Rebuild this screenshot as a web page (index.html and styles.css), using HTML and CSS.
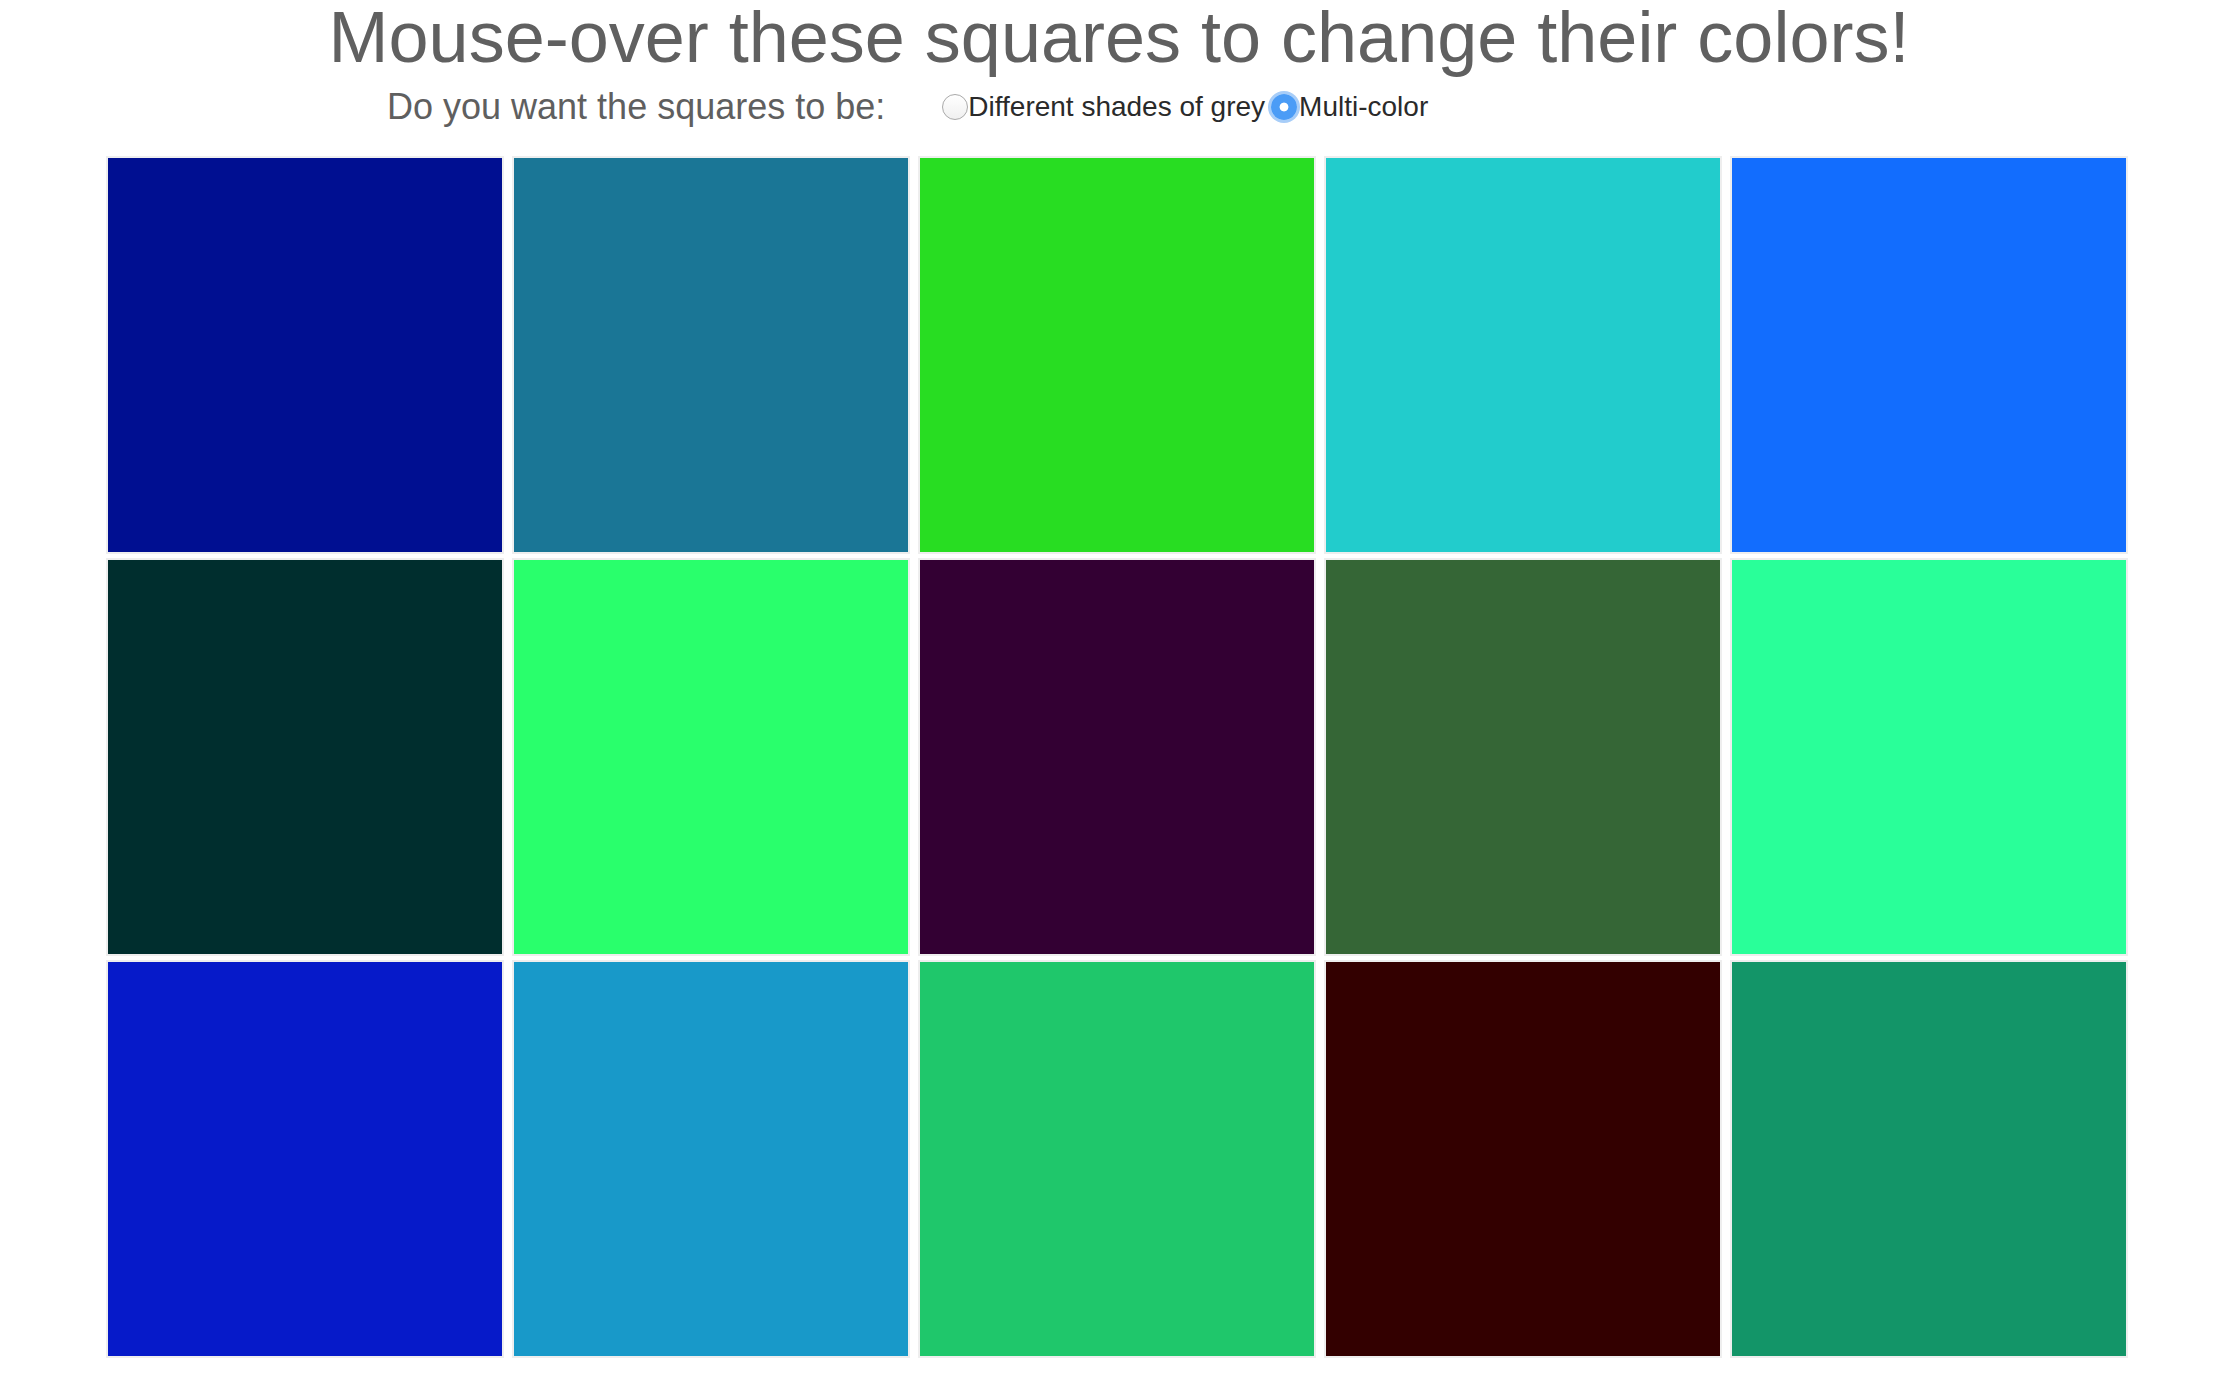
FILE: index.html
```html
<!DOCTYPE html>
<html>
<head>
<meta charset="utf-8">
<link rel="stylesheet" href="styles.css">
</head>
<body>
<h1 class="title">Mouse-over these squares to change their colors!</h1>
<form class="options">
  <span class="question">Do you want the squares to be:</span>
  <label class="choice"><input type="radio" name="mode" class="radio">Different shades of grey</label>
  <label class="choice"><input type="radio" name="mode" class="radio radio-on" checked>Multi-color</label>
</form>
<div class="board">
  <div class="square" style="background:#000f91"></div>
  <div class="square" style="background:#1a7696"></div>
  <div class="square" style="background:#28dd22"></div>
  <div class="square" style="background:#22cccc"></div>
  <div class="square" style="background:#126dfe"></div>
  <div class="square" style="background:#002e2e"></div>
  <div class="square" style="background:#29ff6c"></div>
  <div class="square" style="background:#330033"></div>
  <div class="square" style="background:#356636"></div>
  <div class="square" style="background:#29ff99"></div>
  <div class="square" style="background:#061ac9"></div>
  <div class="square" style="background:#1899c9"></div>
  <div class="square" style="background:#1fc76b"></div>
  <div class="square" style="background:#330000"></div>
  <div class="square" style="background:#139568"></div>
</div>
</body>
</html>
```

FILE: styles.css
```css
html, body {
  margin: 0;
  padding: 0;
  background: #ffffff;
}

body {
  font-family: "Liberation Sans", Arial, Helvetica, sans-serif;
}

.title {
  margin: 1px 0 0 0;
  font-size: 72px;
  line-height: 72px;
  font-weight: normal;
  color: #606060;
  text-align: center;
}

.options {
  display: flex;
  align-items: center;
  margin: 14px 0 0 387px;
  height: 40px;
}

.question {
  font-size: 36px;
  color: #5f5f5f;
  margin-right: 57px;
}

.choice {
  display: flex;
  align-items: center;
  font-size: 28px;
  color: #2a2a2a;
}

.radio {
  appearance: none;
  -webkit-appearance: none;
  width: 26px;
  height: 26px;
  margin: 0;
  border-radius: 50%;
  border: 1px solid #a9a9a9;
  background: linear-gradient(#ffffff, #f0f0f0);
  box-sizing: border-box;
  outline: none;
}

.radio-on {
  margin: 0 2px 0 6px;
  border: 0;
  background: radial-gradient(circle, #ffffff 0, #ffffff 4px, #4b9cf6 4.8px);
  box-shadow: 0 0 0 3px #a7cdf8;
}

.board {
  display: grid;
  grid-template-columns: repeat(5, 398px);
  grid-auto-rows: 398px;
  column-gap: 8px;
  row-gap: 4px;
  margin: 29px 0 0 106px;
}

.square {
  border: 2px solid #eeeeee;
}
```
